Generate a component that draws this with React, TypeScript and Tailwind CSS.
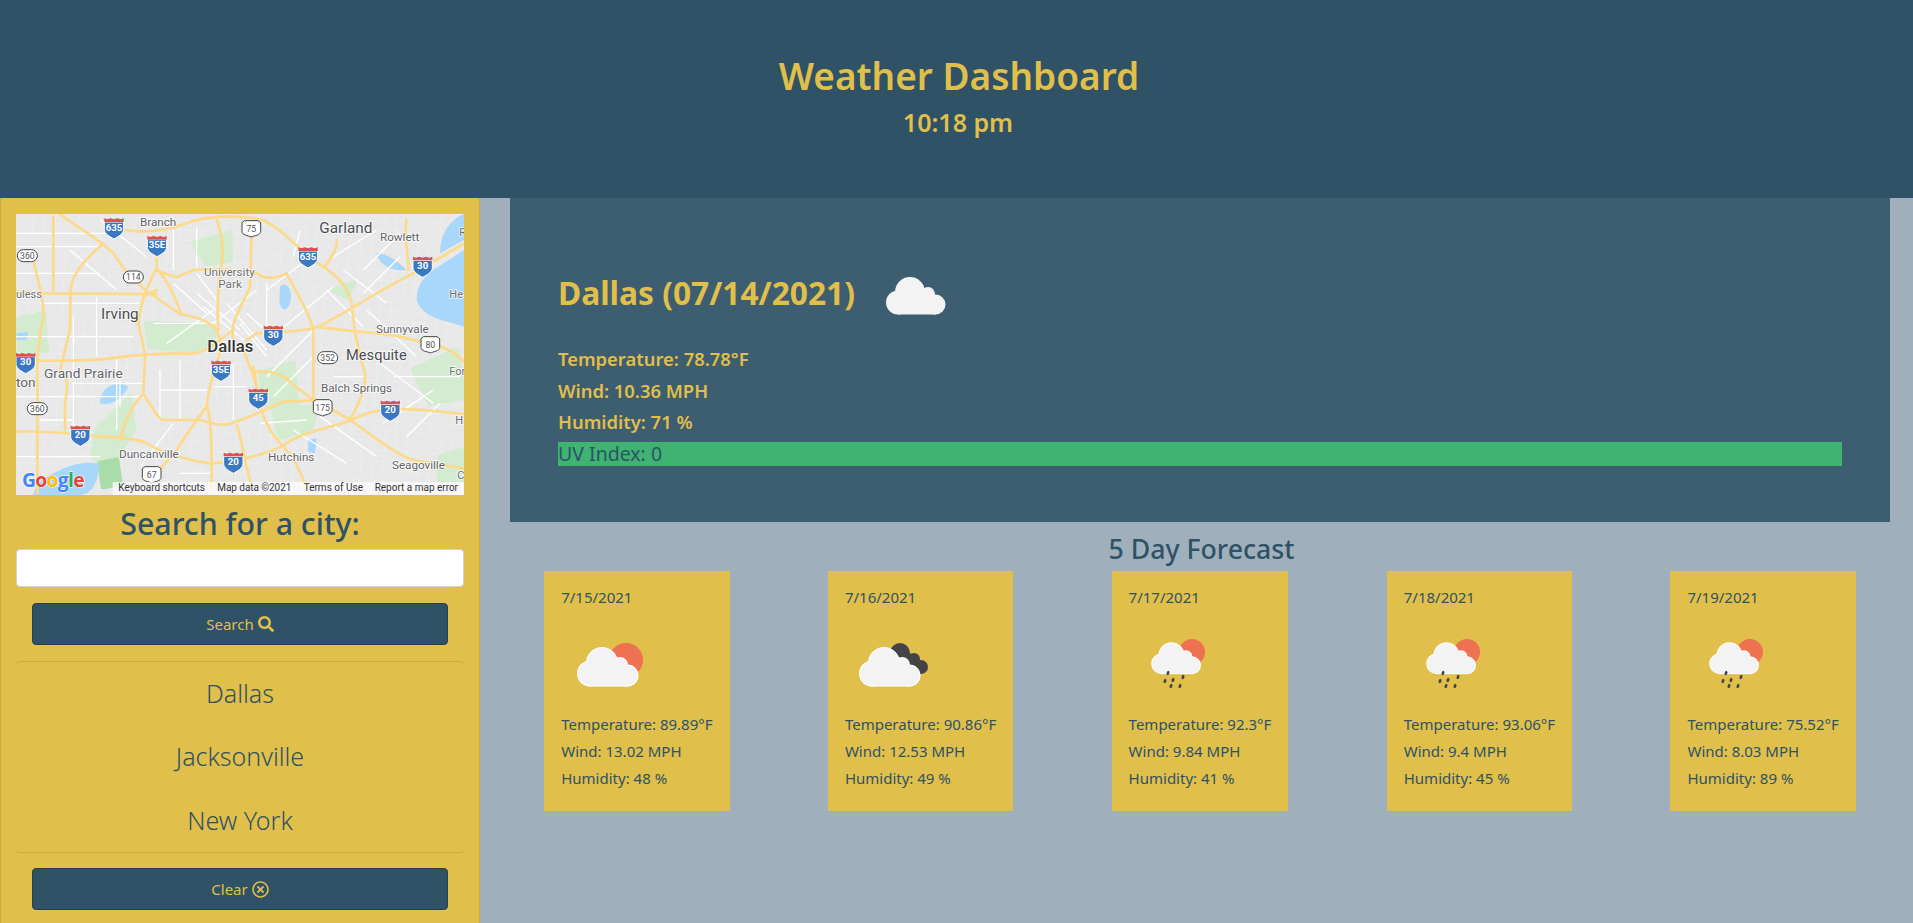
import { FaSearch, FaRegTimesCircle } from "react-icons/fa";

const MAJOR = [
  "M180 72C240 120 290 140 340 190L375 240L435 300L540 372C590 380 630 395 650 420L665 470",
  "M340 110C400 130 480 130 560 100C620 75 720 75 790 90C850 120 890 170 930 205C990 240 1045 280 1055 340C1060 400 1070 470 1095 550C1100 600 1070 650 1050 690",
  "M48 512C150 512 260 515 330 505C400 495 480 490 560 490C610 498 640 460 700 420",
  "M740 450L770 430C850 425 920 425 960 408C1050 360 1140 300 1250 245L1392 160",
  "M470 150L470 235C440 290 420 340 415 400C425 450 440 490 433 540L430 612C400 640 375 690 360 750",
  "M470 235C510 280 530 330 545 375M665 470C650 530 630 560 620 650C590 690 560 730 530 780L470 850",
  "M48 725C120 722 190 730 240 732C320 745 400 740 440 760C490 790 560 810 630 820L700 815C760 800 820 785 860 760C900 730 960 720 1050 692C1090 670 1130 660 1170 658C1250 655 1320 665 1392 672",
  "M730 480C755 540 775 590 775 620C785 680 810 730 850 770C880 800 905 850 920 900",
  "M755 130L750 290C730 340 700 380 697 420L700 450",
  "M760 545C810 540 850 550 880 585L940 630C980 650 1020 670 1050 690C1110 730 1180 790 1240 810L1392 835",
  "M950 410C1040 425 1130 425 1200 440L1285 460C1340 470 1370 490 1392 515",
  "M48 305L130 310L430 312L470 312",
  "M100 210C115 280 135 340 130 390C115 440 110 500 112 600L112 910",
  "M310 160C260 205 215 250 212 300L210 420L180 540C205 560 205 590 195 640L195 720",
  "M760 530L775 620",
  "M940 630L940 420C930 370 890 310 860 250C820 270 790 265 770 250C720 240 640 235 580 240L530 262L480 245M470 300L430 320",
  "M430 612C450 640 470 680 485 690L600 690C640 700 670 715 720 690C760 680 810 650 850 635L940 632",
  "M620 650C635 680 635 780 635 900M710 705C730 760 730 820 760 900",
  "M650 90C665 130 670 180 665 220C655 280 650 350 655 420",
  "M1010 150C1015 170 1000 190 975 230M1220 90C1210 140 1225 190 1225 240",
  "M160 80L160 300",
];

const STREETS = [
  "M48 130H340M48 250H300M120 340H420M48 440H400M220 580H430M48 620H430M48 800H300M220 380V720M290 320V500M350 500V720M520 120V240M590 110V240M800 280V420M900 120L880 200",
  "M480 540V690M540 510V690M700 520V690M480 600H620M540 850H640M640 590H740M800 560L940 420M820 620L940 500M980 300L1090 410M1000 560H1090M1100 360L1250 500M1140 520L1300 640M1150 700L1300 600M1180 560H1380",
  "M590 310L720 420M610 350L730 450M740 370L830 450M720 400L800 500M680 340L800 480M640 400L770 300M590 250L650 330M840 420L1000 290M800 300L960 180M1000 200L1130 120M1090 310L1200 200M1030 240L1160 340",
  "M48 170H300M210 180L350 300M300 90L440 200M520 280L620 370M460 400H640M500 460L640 360M880 720L1040 820M960 680L1130 800M1220 740L1320 640M780 700L920 690M1090 240L1200 130M380 790H540M360 560V650M120 690H220M420 830L520 700",
];

const SHIELDS: [number, number, string][] = [
  [342, 110, "635"], [471, 163, "35E"], [924, 197, "635"], [1268, 225, "30"],
  [820, 432, "30"], [77, 514, "30"], [663, 537, "35E"], [775, 621, "45"],
  [1171, 657, "20"], [241, 732, "20"], [700, 813, "20"],
];

const ROUTES: [number, number, string][] = [
  [82, 197, "360"], [400, 261, "114"], [983, 503, "352"], [112, 656, "360"],
];

const LABELS: [number, number, string, number, string][] = [
  [420, 108, "Branch", 35, "#5f6368"], [958, 130, "Garland", 46, "#4a4d50"], [1140, 154, "Rowlett", 35, "#5f6368"],
  [612, 258, "University", 35, "#6b6f73"], [655, 295, "Park", 35, "#6b6f73"], [48, 324, "uless", 33, "#6b6f73"],
  [303, 388, "Irving", 46, "#4a4d50"], [622, 486, "Dallas", 50, "#333"], [1128, 429, "Sunnyvale", 35, "#5f6368"],
  [1038, 510, "Mesquite", 44, "#4a4d50"], [132, 563, "Grand Prairie", 41, "#5f6368"], [48, 592, "ton", 41, "#5f6368"],
  [963, 607, "Balch Springs", 35, "#5f6368"], [357, 804, "Duncanville", 35, "#5f6368"], [804, 813, "Hutchins", 35, "#5f6368"],
  [1176, 837, "Seagoville", 35, "#5f6368"], [1348, 324, "He", 33, "#6b6f73"], [1348, 556, "For", 33, "#6b6f73"],
  [1366, 702, "H", 33, "#6b6f73"], [1372, 866, "C", 33, "#6b6f73"], [1378, 138, "R", 33, "#6b6f73"],
];

function DallasMap() {
  return (
    <svg viewBox="48 72 1344 843" className="block h-[281px] w-[448px]" style={{ fontFamily: "Roboto, sans-serif" }}>
      <defs>
        <pattern id="grid" width="34" height="30" patternUnits="userSpaceOnUse" patternTransform="rotate(3)">
          <path d="M0 0H34M0 0V30" stroke="#fff" strokeWidth="2" fill="none" />
        </pattern>
      </defs>
      <rect x="48" y="72" width="1344" height="843" fill="#e8e8e8" />
      <rect x="48" y="72" width="1344" height="843" fill="url(#grid)" opacity="0.5" />
      <g fill="#d3ecd0" stroke="#d3ecd0" strokeWidth="16" strokeLinejoin="round">
        <path d="M440 400L640 410L640 470L560 480L450 470Z" />
        <path d="M780 550L880 520L890 640L800 650Z" />
        <path d="M290 720L390 620L400 720L330 830L280 800Z" />
        <path d="M1240 540L1370 480L1392 620L1290 640Z" />
        <path d="M300 820L350 810L360 880L310 890Z" fill="#a9dca9" stroke="#a9dca9" />
        <path d="M50 390L130 370L140 480L60 480Z" />
        <path d="M1000 300L1060 280L1040 320Z" />
        <path d="M820 660L950 650L930 720L840 740Z" />
        <path d="M1320 800L1392 780L1392 870L1320 870Z" />
        <path d="M580 160L690 130L690 210L620 220Z" />
      </g>
      <g fill="#a9d6fb">
        <path d="M1392 180L1392 410C1340 390 1270 390 1250 330C1250 290 1270 260 1300 240Z" />
        <path d="M1392 72V150L1320 190C1320 130 1350 90 1392 72Z" />
        <path d="M1130 190C1170 190 1210 230 1220 240C1180 245 1140 230 1130 190Z" />
        <path d="M300 640C300 590 350 570 385 590C370 620 340 650 300 640Z" />
        <path d="M110 880C170 840 230 810 295 820C300 860 280 915 240 915L100 915Z" />
        <path d="M840 290C860 270 880 300 870 340C860 370 840 360 838 330Z" />
        <path d="M50 430L85 425L80 450L50 450Z" />
        <path d="M925 750L950 745L945 790L925 785Z" />
      </g>
      <g fill="none" stroke="#ffffff" strokeWidth="4">
        {STREETS.map((d) => (
          <path key={d} d={d} />
        ))}
      </g>
      <g fill="none" stroke="#fdd98a" strokeWidth="8" strokeLinecap="round" strokeLinejoin="round">
        {MAJOR.map((d) => (
          <path key={d} d={d} />
        ))}
      </g>
      {SHIELDS.map(([x, y, t]) => (
        <g key={`${x}-${y}`} transform={`translate(${x} ${y})`}>
          <path d="M-29 -14H29V8C29 22 12 30 0 37C-12 30 -29 22 -29 8Z" fill="#3b78c3" stroke="#fff" strokeWidth="3" />
          <path d="M-29 -25L-20 -22L-10 -25L0 -22L10 -25L20 -22L29 -25V-14H-29Z" fill="#d9534f" />
          <text x="0" y="12" textAnchor="middle" fontSize="29" fontWeight="700" fill="#fff">{t}</text>
        </g>
      ))}
      {ROUTES.map(([x, y, t]) => (
        <g key={`${x}-${y}`}>
          <rect x={x - 30} y={y - 18} width="60" height="36" rx="18" fill="#fff" stroke="#444" strokeWidth="3" />
          <text x={x} y={y + 9} textAnchor="middle" fontSize="26" fill="#555">{t}</text>
        </g>
      ))}
      {[[754, 116, "75"], [968, 653, "175"], [1291, 464, "80"], [455, 854, "67"]].map(([x, y, t]) => (
        <g key={String(t)}>
          <path d={`M${Number(x) - 28} ${Number(y) - 18}L${Number(x) - 20} ${Number(y) - 24}H${Number(x) + 20}L${Number(x) + 28} ${Number(y) - 18}V${Number(y) + 8}C${Number(x) + 28} ${Number(y) + 20} ${Number(x) + 10} ${Number(y) + 20} ${x} ${Number(y) + 25}C${Number(x) - 10} ${Number(y) + 20} ${Number(x) - 28} ${Number(y) + 20} ${Number(x) - 28} ${Number(y) + 8}Z`} fill="#fff" stroke="#444" strokeWidth="3" />
          <text x={Number(x)} y={Number(y) + 10} textAnchor="middle" fontSize="26" fill="#555">{t}</text>
        </g>
      ))}
      <g stroke="#ffffff" strokeWidth="5" strokeOpacity="0.85" paintOrder="stroke">
        {LABELS.map(([x, y, t, s, c]) => (
          <text key={t} x={x} y={y} fontSize={s} fill={c} fontWeight={t === "Dallas" ? 500 : 400}>{t}</text>
        ))}
      </g>
      <text x="66" y="892" fontSize="58" fontWeight="700" style={{ fontFamily: "'Open Sans', sans-serif" }} stroke="#fff" strokeWidth="3" paintOrder="stroke" textLength="188">
        <tspan fill="#4285f4">G</tspan><tspan fill="#ea4335">o</tspan><tspan fill="#fbbc05">o</tspan><tspan fill="#4285f4">g</tspan><tspan fill="#34a853">l</tspan><tspan fill="#ea4335">e</tspan>
      </text>
      <rect x="338" y="876" width="1054" height="39" fill="#fff" fillOpacity="0.7" />
      <g fontSize="30" fill="#333">
        <text x="355" y="903" textLength="260">Keyboard shortcuts</text>
        <text x="652" y="903" textLength="222">Map data ©2021</text>
        <text x="911" y="903" textLength="178">Terms of Use</text>
        <text x="1124" y="903" textLength="250">Report a map error</text>
      </g>
    </svg>
  );
}

function CloudShape({ x, y, scale, outline }: { x: number; y: number; scale: number; outline?: boolean }) {
  const shape = (
    <>
      <circle cx="24" cy="15" r="15" />
      <circle cx="12" cy="25.5" r="12" />
      <circle cx="42" cy="17" r="7" />
      <circle cx="49.5" cy="27.5" r="10" />
      <rect x="12" y="20" width="38" height="17.5" />
    </>
  );
  return (
    <g transform={`translate(${x} ${y}) scale(${scale})`}>
      {outline && <g fill="#ffffff" stroke="#ffffff" strokeWidth="2">{shape}</g>}
      <g fill="#f3f3f3">{shape}</g>
    </g>
  );
}

function PartlySun() {
  return (
    <svg viewBox="0 0 100 100" className="block h-[100px] w-[100px]">
      <circle cx="65" cy="45" r="17" fill="#ee7152" />
      <CloudShape x={17} y={33} scale={1} outline />
    </svg>
  );
}

function DarkCloud() {
  return (
    <svg viewBox="0 0 100 100" className="block h-[100px] w-[100px]">
      <g fill="#444447">
        <circle cx="55" cy="38" r="10" />
        <circle cx="69" cy="44" r="6" />
        <circle cx="76" cy="52" r="7" />
        <path d="M50 30L72 42L72 58L50 58Z" />
      </g>
      <CloudShape x={15} y={33} scale={1} outline />
    </svg>
  );
}

function RainSun() {
  const drops = [[39, 58], [36, 66], [44, 65], [54, 62], [42, 71], [51, 71]];
  return (
    <svg viewBox="0 0 100 100" className="block h-[100px] w-[100px]">
      <circle cx="63" cy="37" r="13" fill="#ee7152" />
      <CloudShape x={23} y={28} scale={0.81} outline />
      {drops.map(([x, y]) => (
        <ellipse key={`${x}-${y}`} cx={x} cy={y} rx="1.4" ry="2.2" fill="#444447" transform={`rotate(20 ${x} ${y})`} />
      ))}
    </svg>
  );
}

const FORECAST = [
  { date: "7/15/2021", icon: <PartlySun />, temp: "89.89", wind: "13.02", hum: "48" },
  { date: "7/16/2021", icon: <DarkCloud />, temp: "90.86", wind: "12.53", hum: "49" },
  { date: "7/17/2021", icon: <RainSun />, temp: "92.3", wind: "9.84", hum: "41" },
  { date: "7/18/2021", icon: <RainSun />, temp: "93.06", wind: "9.4", hum: "45" },
  { date: "7/19/2021", icon: <RainSun />, temp: "75.52", wind: "8.03", hum: "89" },
];

const BUTTON = "mx-4 flex h-[42px] items-center justify-center gap-1 rounded border border-[#2a3d49] bg-[#2f5266] text-[15px] text-[#e0bf4a]";

export default function App() {
  return (
    <div className="flex h-[923px] w-[1913px] flex-col overflow-hidden bg-[#9fb0bc] text-[#2f5266] font-['Noto_Sans','Open_Sans',sans-serif]">
      <header className="flex h-[198px] flex-none flex-col items-center justify-center bg-[#2f5266] pb-[2px] text-[#e0bf4a]">
        <h1 className="-mt-[2px] ml-[5px] text-[37px] font-semibold leading-[46px]">Weather Dashboard</h1>
        <p className="mt-[4px] ml-[3px] text-[25px] font-semibold leading-[38px]">10:18 pm</p>
      </header>
      <div className="flex min-h-0 flex-1">
        <aside className="flex w-[480px] flex-none flex-col rounded-t border-x border-[#c9ab43] bg-[#e0bf4a] px-[15px] pt-4">
          <DallasMap />
          <h2 className="mt-[10px] text-center text-[30.3px] font-medium leading-[38px]">Search for a city:</h2>
          <input aria-label="city" className="mt-[6px] h-[38px] w-full flex-none rounded border border-[#ced4da] bg-white" />
          <button className={`${BUTTON} mt-4`}>Search <FaSearch className="text-[16px]" /></button>
          <ul className="mt-4 rounded border-y border-[#c9ab43] text-center text-[25px] font-light">
            <li className="flex h-[63.4px] items-center justify-center">Dallas</li>
            <li className="flex h-[63.4px] items-center justify-center">Jacksonville</li>
            <li className="flex h-[63.4px] items-center justify-center">New York</li>
          </ul>
          <button className={`${BUTTON} mt-[15px]`}>Clear <FaRegTimesCircle className="text-[17px]" /></button>
        </aside>
        <main className="flex min-w-0 flex-1 flex-col">
          <section className="ml-[30px] mr-[23px] flex h-[324px] flex-none flex-col bg-[#3d5d70] px-12 pt-[71px] text-[#e0bf4a]">
            <div className="flex h-[48px] items-center">
              <h2 className="text-[31.7px] font-bold leading-[48px]">Dallas (07/14/2021)</h2>
              <svg viewBox="0 0 60 38" className="ml-[31px] mt-[5px] h-[38px] w-[60px]"><CloudShape x={0} y={0} scale={1} /></svg>
            </div>
            <div className="mt-[26px] text-[18.4px] font-semibold leading-[31.7px]">
              <p>Temperature: 78.78°F</p>
              <p>Wind: 10.36 MPH</p>
              <p>Humidity: 71 %</p>
            </div>
            <p className="mt-[4px] h-[24px] bg-[#3eb372] text-[19.5px] leading-[24px] text-[#2f5266]">UV Index: 0</p>
          </section>
          <h3 className="mt-[9px] h-[40px] pl-[10px] text-center text-[26.7px] font-medium leading-[36px]">5 Day Forecast</h3>
          <div className="ml-[15px] mr-[8px] flex justify-around">
            <ForecastCards />
          </div>
        </main>
      </div>
    </div>
  );
}

function ForecastCards() {
  return (
    <>
      {FORECAST.map((f) => (
        <article key={f.date} className="h-[240px] flex-none bg-[#e0bf4a] p-[17px] text-[15px] leading-[27.2px]">
          <p className="-mt-[3px] leading-[24px]">{f.date}</p>
          <div className="mt-[6px]">{f.icon}</div>
          <p className="-mt-[4px]">Temperature: {f.temp}°F</p>
          <p>Wind: {f.wind} MPH</p>
          <p>Humidity: {f.hum} %</p>
        </article>
      ))}
    </>
  );
}
